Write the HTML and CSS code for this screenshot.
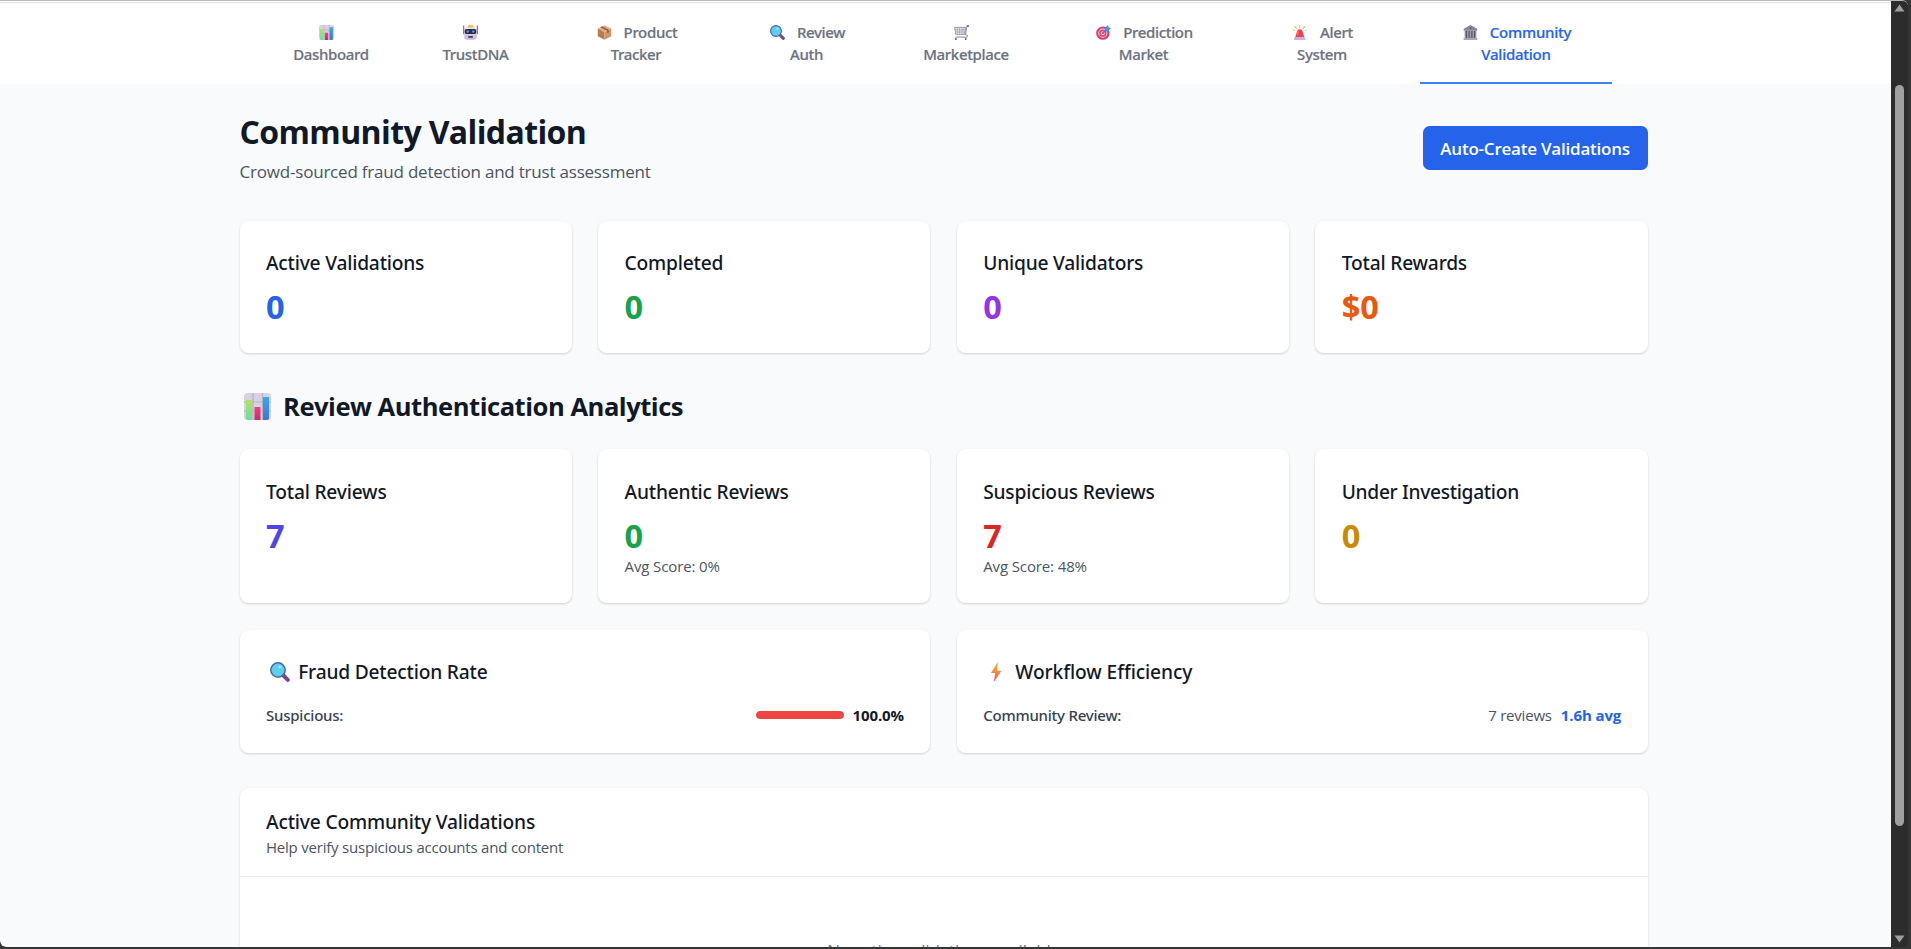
FILE: index.html
```
<!DOCTYPE html>
<html lang="en">
<head>
<meta charset="utf-8">
<title>Community Validation</title>
<link rel="stylesheet" href="styles.css">
</head>
<body>
<svg class="defs" aria-hidden="true">
  <defs>
    <linearGradient id="gGreen" x1="0" y1="0" x2="0" y2="1"><stop offset="0" stop-color="#b4e35c"/><stop offset="1" stop-color="#5fe3a0"/></linearGradient>
    <linearGradient id="gPink" x1="0" y1="0" x2="0" y2="1"><stop offset="0" stop-color="#f0417f"/><stop offset="1" stop-color="#c42d68"/></linearGradient>
    <linearGradient id="gBlue" x1="0" y1="0" x2="0" y2="1"><stop offset="0" stop-color="#35a9f4"/><stop offset="1" stop-color="#3c78cc"/></linearGradient>
    <linearGradient id="gBolt" x1="0" y1="0" x2="0" y2="1"><stop offset="0" stop-color="#fbb03f"/><stop offset=".5" stop-color="#fb8a3e"/><stop offset="1" stop-color="#f4475e"/></linearGradient>
    <linearGradient id="gFace" x1="0" y1="0" x2="0" y2="1"><stop offset="0" stop-color="#ebe3f2"/><stop offset="1" stop-color="#c6b4dc"/></linearGradient>
    <symbol id="chart" viewBox="0 0 27 27">
      <rect width="27" height="27" rx="3.5" fill="#d8d2e0"/>
      <path d="M0 9H27M0 18H27M9 0V27M18.5 0V27" stroke="#b7afc2" stroke-width="1.2"/>
      <path d="M2 7h6v20H4a2 2 0 0 1-2-2z" fill="url(#gGreen)"/>
      <path d="M10.500 14h6v13h-6z" fill="url(#gPink)"/>
      <path d="M19 4h6v21a2 2 0 0 1-2 2h-4z" fill="url(#gBlue)"/>
    </symbol>
    <symbol id="robot" viewBox="0 0 16 16">
      <path d="M0 .5h1.300v3.500H2V10H1a1 1 0 0 1-1-1zM16 .5h-1.300v3.500H14V10h1a1 1 0 0 0 1-1z" fill="#f2478a"/>
      <path d="M4 2Q8 0 12 2V4H4z" fill="#e9dff0"/>
      <rect x="5.300" y=".3" width="5.400" height="2.400" rx="1" fill="#fbb13c"/>
      <rect x="1.200" y="3" width="13.600" height="12.800" rx="3.500" fill="url(#gFace)"/>
      <rect x="1.800" y="4.300" width="12.400" height="5.200" rx="2" fill="#2c2946"/>
      <circle cx="5" cy="6.900" r="1.300" fill="#2ea9ec"/><circle cx="11" cy="6.900" r="1.300" fill="#2ea9ec"/>
      <rect x="5.500" y="11.700" width="5" height="2" rx=".6" fill="#45395c"/>
    </symbol>
    <symbol id="box" viewBox="0 0 16 16">
      <path d="M8 .3l7.200 3.500L8 7.700.8 3.800z" fill="#e0ac80"/>
      <path d="M.8 3.800L8 7.700V15.800L.8 12z" fill="#b87a50"/>
      <path d="M15.200 3.800L8 7.700V15.800l7.200-3.800z" fill="#cf9468"/>
      <path d="M3.600 2.400l7.200 3.800v2.500l1.900-1V5.200L5.500 1.500z" fill="#8e5c3f"/>
    </symbol>
    <symbol id="lens" viewBox="0 0 20 20">
      <path d="M12.500 12.500l5.300 5.300" stroke="#7c4689" stroke-width="4" stroke-linecap="round"/>
      <circle cx="8" cy="8" r="7.200" fill="#5fcdec" stroke="#4269a6" stroke-width="1.500"/>
      <circle cx="10" cy="5" r="1.500" fill="#a3e9fb"/>
    </symbol>
    <symbol id="cart" viewBox="0 0 16 16">
      <path d="M.7 2.500H12.500L11.500 10H1.800z" fill="#f3f1f6" stroke="#8d8895" stroke-width=".9"/>
      <path d="M3.500 2.500v7.500M6 2.500v7.500M8.500 2.500v7.500M10.700 2.500v7.500M.9 5h11M1.300 7.500h10.300" stroke="#9a95a2" stroke-width=".75"/>
      <path d="M15.300 1h-1.500L12.300 10.300q2.300 0 2 1.600T12 13H1.500" fill="none" stroke="#9a93a8" stroke-width="1.100"/>
      <path d="M1.500 13H13" stroke="#bbb0ce" stroke-width="1.500"/>
      <path d="M14 1.200h1.800" stroke="#4560b8" stroke-width="1.800"/>
      <circle cx="2" cy="14.900" r="1.100" fill="#4560b8"/><circle cx="12.500" cy="14.900" r="1.100" fill="#4560b8"/>
    </symbol>
    <symbol id="target" viewBox="0 0 16 16">
      <circle cx="7.300" cy="8.700" r="6" fill="#e6dff0" stroke="#e0406f" stroke-width="2.300"/>
      <circle cx="7.300" cy="8.700" r="3" fill="#e6dff0" stroke="#e0406f" stroke-width="1.800"/>
      <circle cx="7.300" cy="8.700" r="1" fill="#e0406f"/>
      <path d="M7.300 8.700L12.500 3.500" stroke="#4b70b5" stroke-width="1.300"/>
      <path d="M9.300 3.500L12.800 0l.7 2.500 2.500.7-3.300 3.500-3.400.2z" fill="#2f9bee"/>
    </symbol>
    <symbol id="siren" viewBox="0 0 16 16">
      <path d="M7.200 0v3M1.700 1.300l2.300 2.700M12.700 1.300l-2.300 2.700M.3 5.500l1.500.6M14.100 5.500l-1.500.6" stroke="#fbbb55" stroke-width="1.300"/>
      <path d="M4.200 7Q4.500 4.500 7.200 4.500T10.200 7L12 13H2.400z" fill="#f83c50"/>
      <path d="M5.500 6.500L4.800 11" stroke="#ff8795" stroke-width="1"/>
      <path d="M1.800 12.800H12.600l1 3.200H.8z" fill="#c6b3df"/>
    </symbol>
    <symbol id="bank" viewBox="0 0 16 16">
      <path d="M8 0l7.200 4v2.200H.8V4z" fill="#8d8598"/>
      <path d="M1.700 6h12.600v8H1.700z" fill="#a69eaf"/>
      <path d="M3.600 6.200V14M6.500 6.200V14M9.500 6.200V14M12.400 6.200V14" stroke="#5a4f65" stroke-width="1.300"/>
      <path d="M.7 13.900H15.300V16H.7z" fill="#aca4b5"/>
      <circle cx="8" cy="3.500" r="1" fill="#665c72"/>
    </symbol>
    <symbol id="bolt" viewBox="0 0 20 20">
      <path d="M10.800 0L4 11h4.200L6.800 20 14.500 8.700h-4.400z" fill="url(#gBolt)"/>
    </symbol>
  </defs>
</svg>

<div class="window">
  <div class="page">
    <nav class="nav">
      <a class="tab"><svg class="emoji"><use href="#chart"/></svg><br>Dashboard</a>
      <a class="tab"><svg class="emoji"><use href="#robot"/></svg><br>TrustDNA</a>
      <a class="tab"><svg class="emoji"><use href="#box"/></svg>Product<br>Tracker</a>
      <a class="tab"><svg class="emoji"><use href="#lens"/></svg>Review<br>Auth</a>
      <a class="tab"><svg class="emoji"><use href="#cart"/></svg><br>Marketplace</a>
      <a class="tab"><svg class="emoji"><use href="#target"/></svg>Prediction<br>Market</a>
      <a class="tab"><svg class="emoji"><use href="#siren"/></svg>Alert<br>System</a>
      <a class="tab active"><svg class="emoji"><use href="#bank"/></svg>Community<br>Validation</a>
    </nav>

    <main class="main">
      <header class="head">
        <div>
          <h1 class="title">Community Validation</h1>
          <p class="subtitle">Crowd-sourced fraud detection and trust assessment</p>
        </div>
        <button class="button">Auto-Create Validations</button>
      </header>

      <section class="grid">
        <div class="card"><h3 class="label">Active Validations</h3><p class="value blue">0</p></div>
        <div class="card"><h3 class="label">Completed</h3><p class="value green">0</p></div>
        <div class="card"><h3 class="label">Unique Validators</h3><p class="value purple">0</p></div>
        <div class="card"><h3 class="label">Total Rewards</h3><p class="value orange">$0</p></div>
      </section>

      <h2 class="section-title"><svg class="emoji-lg"><use href="#chart"/></svg>Review Authentication Analytics</h2>

      <section class="grid analytics">
        <div class="card"><h3 class="label">Total Reviews</h3><p class="value indigo">7</p></div>
        <div class="card"><h3 class="label">Authentic Reviews</h3><p class="value green">0</p><p class="note">Avg Score: 0%</p></div>
        <div class="card"><h3 class="label">Suspicious Reviews</h3><p class="value red">7</p><p class="note">Avg Score: 48%</p></div>
        <div class="card"><h3 class="label tight">Under Investigation</h3><p class="value yellow">0</p></div>
      </section>

      <section class="grid two">
        <div class="card">
          <h3 class="label"><svg class="emoji-md"><use href="#lens"/></svg>Fraud Detection Rate</h3>
          <div class="row">
            <span class="row-name">Suspicious:</span>
            <span class="row-data"><span class="track"><span class="fill" style="width:100%"></span></span><b class="strong">100.0%</b></span>
          </div>
        </div>
        <div class="card">
          <h3 class="label loose"><svg class="emoji-md"><use href="#bolt"/></svg>Workflow Efficiency</h3>
          <div class="row">
            <span class="row-name">Community Review:</span>
            <span class="row-data"><span class="note">7 reviews</span><b class="strong blue">1.6h avg</b></span>
          </div>
        </div>
      </section>

      <section class="panel">
        <div class="panel-head">
          <h3 class="label">Active Community Validations</h3>
          <p class="note">Help verify suspicious accounts and content</p>
        </div>
        <p class="empty">No active validations available</p>
      </section>
    </main>
  </div>
  <div class="scrollbar">
    <svg class="arrow" viewBox="0 0 11 8"><path d="M5.500 .5L10.500 7.500H.5z"/></svg>
    <div class="thumb"></div>
    <svg class="arrow" viewBox="0 0 11 8"><path d="M5.500 7.500L.5 .5h10z"/></svg>
  </div>
</div>
</body>
</html>
```

FILE: styles.css
```
* { box-sizing: border-box; margin: 0; padding: 0; }
html, body { height: 100%; overflow: hidden; }
body {
  background: #353535;
  color: #111827;
  font-family: "Open Sans", "Noto Sans", sans-serif;
}
.defs { position: absolute; width: 0; height: 0; }
.window {
  display: flex;
  width: 1908px;
  height: 947px;
  border-top: 1px solid #bababa;
  border-radius: 0 6px 6px 6px;
  background: #2c2c2c;
  overflow: hidden;
}
.page {
  width: 1891px;
  height: 946px;
  overflow: hidden;
  background: #f9fafc;
  border-radius: 0 0 0 6px;
}

.nav {
  display: grid;
  grid-template-columns: 184px 105px 216px 125px 194px 161px 196px 192px;
  height: 83px;
  padding-left: 239px;
  background: #fff;
  box-shadow: inset 0 1px #fff, inset 0 2px #e3e3e3;
}
.tab {
  padding-top: 20px;
  color: #6b7280;
  font: 500 15px/22px "Noto Sans", sans-serif;
  letter-spacing: -.34px;
  -webkit-text-stroke: .2px;
  text-align: center;
}
.tab.active { color: #2563eb; border-bottom: 2px solid #3b82f6; letter-spacing: -.26px; }
.emoji { width: 15px; height: 15px; margin: 0 12px 0 2px; vertical-align: -2px; -webkit-text-stroke: 0; }

.main { width: 1647.6px; padding: 27px 0 0 239.6px; }
.head {
  display: flex;
  align-items: center;
  justify-content: space-between;
  height: 74px;
  margin-bottom: 36px;
}
.title { padding-top: 1px; font-size: 32px; line-height: 40px; font-weight: 700; letter-spacing: -.62px; }
.subtitle { margin-top: 7px; color: #4b5563; font-size: 17px; line-height: 26px; letter-spacing: -.21px; }
.button {
  width: 225px;
  height: 44px;
  padding-top: 1px;
  border: 0;
  border-radius: 6.6px;
  background: #2563eb;
  color: #fff;
  font: 600 17px/26px "Open Sans", sans-serif;
  letter-spacing: -.22px;
}

.grid { display: grid; grid-template-columns: repeat(4, 1fr); gap: 26.4px; }
.two { grid-template-columns: repeat(2, 1fr); margin-top: 27px; }
.card, .panel {
  background: #fff;
  border-radius: 8.8px;
  box-shadow: 0 1px 3px rgba(0, 0, 0, .1), 0 1px 2px rgba(0, 0, 0, .07);
}
.card { padding: 27.4px 26.4px 0; height: 132px; }
.analytics .card { height: 154px; padding-top: 28px; }
.two .card { height: 123px; }
.label {
  display: flex;
  align-items: center;
  font: 500 19.2px/30px "Noto Sans", sans-serif;
  letter-spacing: -.2px;
}
.tight { letter-spacing: -.32px; }
.loose { letter-spacing: -.1px; }
.value { margin-top: 9px; font-size: 32.5px; line-height: 40px; font-weight: 700; }
.value + .note { margin-top: -1px; }
.note { color: #4b5563; font-size: 15px; line-height: 22px; letter-spacing: -.21px; }
.value + .note { letter-spacing: -.12px; }
.blue { color: #2563eb; }
.green { color: #16a34a; }
.purple { color: #9333ea; }
.orange { color: #ea580c; }
.indigo { color: #4f46e5; }
.red { color: #dc2626; }
.yellow { color: #ca8a04; }

.section-title {
  display: flex;
  align-items: center;
  height: 35px;
  margin: 36px 0 25px;
  font-size: 25.6px;
  line-height: 35px;
  font-weight: 700;
  letter-spacing: -.49px;
}
.emoji-lg { width: 27px; height: 27px; margin: 0 12.4px 0 4px; }
.emoji-md { width: 20px; height: 20px; margin: 0 8.6px 0 3.6px; }

.row, .row-data { display: flex; align-items: center; }
.row { justify-content: space-between; height: 22px; margin-top: 16.6px; }
.row-data { gap: 9px; }
.row-name { color: #374151; font: 500 15px/22px "Noto Sans", sans-serif; letter-spacing: -.22px; }
.track { width: 88px; height: 8.8px; border-radius: 5px; background: #e5e7eb; overflow: hidden; }
.fill { display: block; height: 100%; border-radius: 5px; background: #ef4444; }
.strong { font-size: 15px; line-height: 22px; font-weight: 700; letter-spacing: -.1px; }

.panel { margin-top: 35px; height: 240px; }
.panel-head { height: 89px; padding: 19px 26.4px 0; border-bottom: 1px solid #e5e7eb; }
.panel-head .label { margin-bottom: -1px; letter-spacing: -.17px; }
.empty { padding-top: 61px; color: #6b7280; font-size: 17px; line-height: 26px; letter-spacing: -.15px; text-align: center; }

.scrollbar {
  display: flex;
  flex-direction: column;
  align-items: center;
  justify-content: space-between;
  width: 17px;
  padding: 3px 0 4px;
}
.arrow { width: 11px; height: 8px; fill: #9f9f9f; }
.thumb { width: 9px; height: 741px; margin-bottom: 37px; border-radius: 5px; background: #9f9f9f; }
```
